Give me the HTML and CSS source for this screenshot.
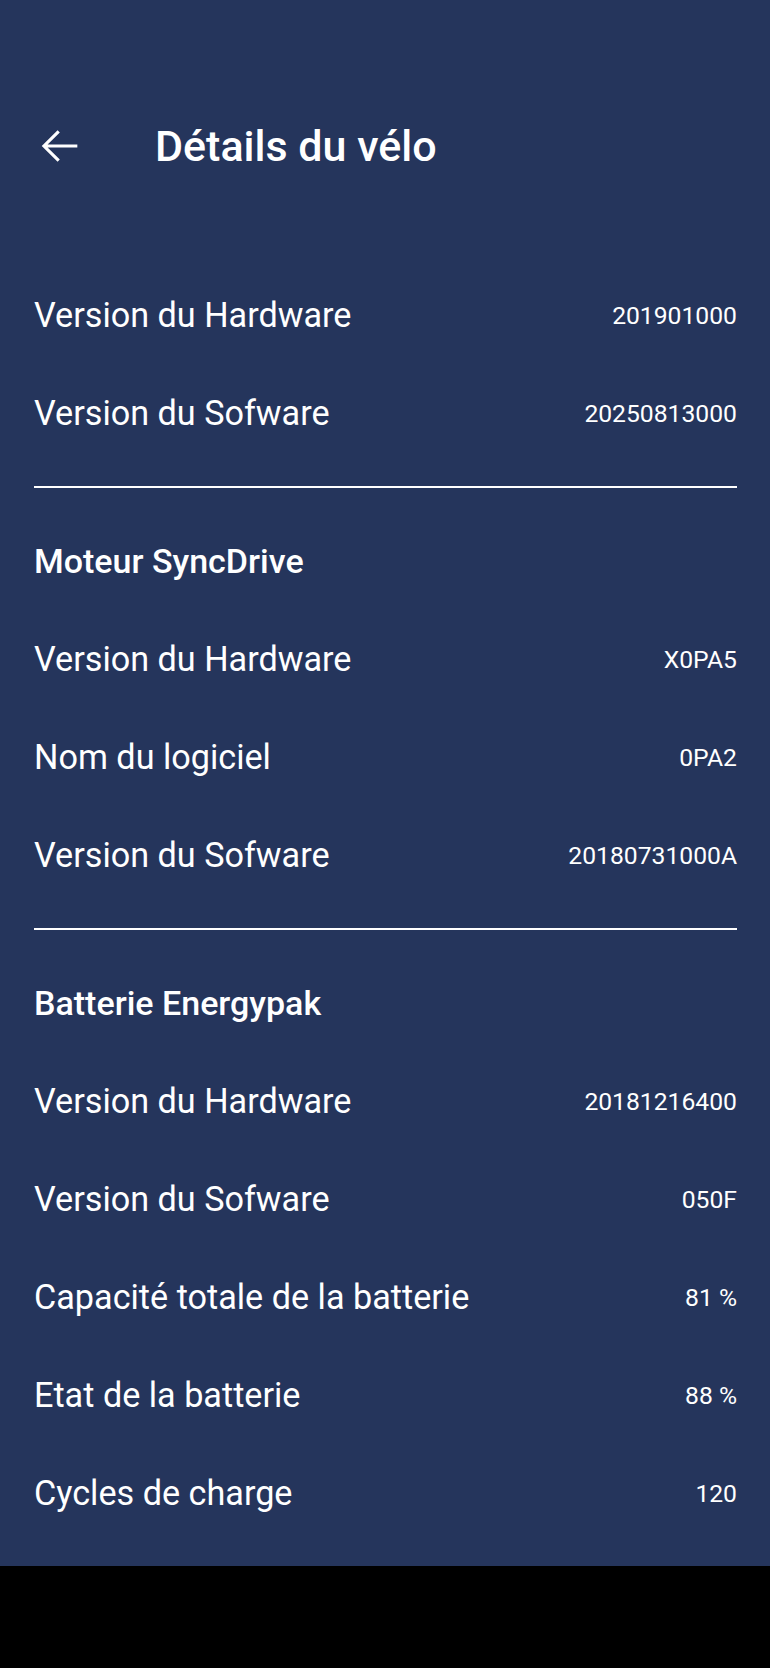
FILE: index.html
```html
<!DOCTYPE html>
<html lang="fr">
<head>
  <meta charset="UTF-8">
  <meta name="viewport" content="width=device-width, initial-scale=1.0">
  <title>Détails du vélo</title>
  <link rel="stylesheet" href="styles.css">
</head>
<body>

  <div class="screen">
    <!-- Header -->
    <header class="topbar">
      <button class="back" aria-label="Retour">
        <svg viewBox="0 0 24 24" width="52" height="52">
          <path d="M20 12H4.6M11.4 5.2L4.6 12l6.8 6.8" fill="none" stroke="#fff" stroke-width="1.45"/>
        </svg>
      </button>
      <h1>Détails du vélo</h1>
    </header>

    <!-- Vélo -->
    <section class="group">
      <div class="row"><span class="label">Version du Hardware</span><span class="value">201901000</span></div>
      <div class="row"><span class="label">Version du Sofware</span><span class="value">20250813000</span></div>
    </section>

    <hr class="divider">

    <!-- Moteur -->
    <section class="group">
      <h2 class="group-title">Moteur SyncDrive</h2>
      <div class="row"><span class="label">Version du Hardware</span><span class="value">X0PA5</span></div>
      <div class="row"><span class="label">Nom du logiciel</span><span class="value">0PA2</span></div>
      <div class="row"><span class="label">Version du Sofware</span><span class="value">20180731000A</span></div>
    </section>

    <hr class="divider">

    <!-- Batterie -->
    <section class="group">
      <h2 class="group-title">Batterie Energypak</h2>
      <div class="row"><span class="label">Version du Hardware</span><span class="value">20181216400</span></div>
      <div class="row"><span class="label">Version du Sofware</span><span class="value">050F</span></div>
      <div class="row"><span class="label">Capacité totale de la batterie</span><span class="value">81 %</span></div>
      <div class="row"><span class="label">Etat de la batterie</span><span class="value">88 %</span></div>
      <div class="row"><span class="label">Cycles de charge</span><span class="value">120</span></div>
    </section>
  </div>

  <div class="navbar"></div>

</body>
</html>
```

FILE: styles.css
```css
body {
  margin: 0;
  font-family: Roboto, 'Noto Sans', sans-serif;
  background: #000;
  color: #fff;
}

.screen {
  height: 1566px;
  background: #25355c;
  padding: 0 33px 0 34px;
  box-sizing: border-box;
  overflow: hidden;
}

.topbar {
  display: flex;
  align-items: center;
  height: 112px;
  padding-top: 90px;
  margin-bottom: 64px;
}

.back {
  width: 52px;
  height: 52px;
  padding: 0;
  border: none;
  background: none;
  cursor: pointer;
}

.back svg {
  display: block;
}

.topbar h1 {
  margin: 0 0 0 69px;
  font-size: 43px;
  font-weight: 500;
}

.row,
.group-title {
  display: flex;
  align-items: center;
  justify-content: space-between;
  height: 98px;
  margin: 0;
}

.label {
  font-size: 34.2px;
}

.value {
  font-size: 24.7px;
}

.group-title {
  font-size: 34px;
  font-weight: 500;
}

.divider {
  margin: 24px 0;
  border: none;
  height: 2px;
  background: #fff;
}

.navbar {
  height: 102px;
  background: #000;
}
```
